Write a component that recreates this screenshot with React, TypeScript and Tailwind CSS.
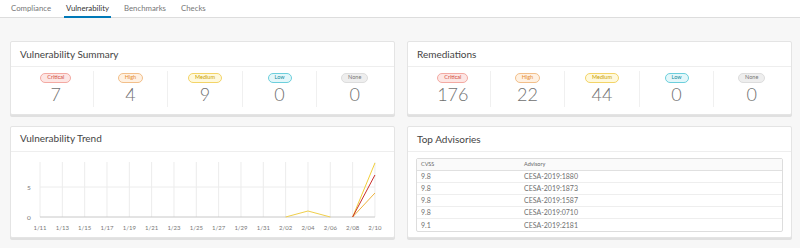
import React from "react";

const badgeStyles: Record<string, string> = {
  Critical: "bg-[#fde6e4] border-[#f3a9a2] text-[#d0463a]",
  High: "bg-[#fff1e2] border-[#f2bf8a] text-[#e58a2e]",
  Medium: "bg-[#fff9dc] border-[#f3d467] text-[#c9a100]",
  Low: "bg-[#e3f7fa] border-[#6ccfdc] text-[#138a9a]",
  None: "bg-[#eeeeee] border-[#dddddd] text-[#777777]",
};

function Badge({ label }: { label: string }) {
  return (
    <span
      className={`inline-flex items-center justify-center h-[10px] px-[6px] rounded-full border text-[5.5px] leading-none ${badgeStyles[label]}`}
    >
      {label}
    </span>
  );
}

function Card({ title, children, className = "" }: { title: string; children: React.ReactNode; className?: string }) {
  return (
    <div className={`bg-white border border-[#e4e4e4] rounded-[2px] shadow-[0_2px_0_0_#e0e0e0] flex flex-col ${className}`}>
      <div className="h-[25px] px-[9px] flex items-center border-b border-[#eeeeee] text-[10px] text-[#444]">{title}</div>
      {children}
    </div>
  );
}

function Summary({ values }: { values: number[] }) {
  const labels = ["Critical", "High", "Medium", "Low", "None"];
  return (
    <div className="grid grid-cols-5 pl-[8px] pr-[2px] pt-[4px] pb-[6px]">
      {labels.map((l, i) => (
        <div
          key={l}
          className={`flex flex-col items-center pt-[2px] h-[36px] ${i < 4 ? "border-r border-[#f0f0f0]" : ""}`}
        >
          <Badge label={l} />
          <div className="text-[18px] leading-[22px] font-light text-[#707070]">{values[i]}</div>
        </div>
      ))}
    </div>
  );
}

function Chart() {
  const labels = ["1/11", "1/13", "1/15", "1/17", "1/19", "1/21", "1/23", "1/25", "1/27", "1/29", "1/31", "2/02", "2/04", "2/06", "2/08", "2/10"];
  const x0 = 29;
  const step = 22.33;
  const y0 = 65;
  const u = 6;
  const X = (i: number) => x0 + i * step;
  const Y = (v: number) => y0 - v * u;
  return (
    <svg width="383" height="86" className="block" style={{ fontFamily: "Lato, sans-serif" }}>
      {labels.map((l, i) => (
        <line key={"g" + i} x1={X(i)} x2={X(i)} y1={10} y2={y0} stroke="#ececec" strokeWidth="1" />
      ))}
      <line x1={X(0)} x2={X(15)} y1={Y(5)} y2={Y(5)} stroke="#ececec" strokeWidth="1" />
      <line x1={X(0)} x2={X(15)} y1={y0} y2={y0} stroke="#c8c8c8" strokeWidth="1" />
      <text x={18} y={Y(5) + 2.5} fontSize="6.5" fill="#777" textAnchor="middle">5</text>
      <text x={18} y={y0 + 2.5} fontSize="6.5" fill="#777" textAnchor="middle">0</text>
      {labels.map((l, i) => (
        <text key={"l" + i} x={X(i)} y={77.5} fontSize="6" fill="#777" textAnchor="middle">{l}</text>
      ))}
      <polyline points={`${X(11)},${Y(0)} ${X(12)},${Y(1)} ${X(13)},${Y(0)}`} fill="none" stroke="#f0cf4c" strokeWidth="1" />
      <line x1={X(14)} y1={Y(0)} x2={X(15)} y2={Y(9)} stroke="#f2cf3a" strokeWidth="1" />
      <line x1={X(14)} y1={Y(0)} x2={X(15)} y2={Y(4)} stroke="#eeb23e" strokeWidth="1" />
      <line x1={X(14)} y1={Y(0)} x2={X(15)} y2={Y(7)} stroke="#c9302c" strokeWidth="1" />
    </svg>
  );
}

function Advisories() {
  const rows = [
    ["9.8", "CESA-2019:1880"],
    ["9.8", "CESA-2019:1873"],
    ["9.8", "CESA-2019:1587"],
    ["9.8", "CESA-2019:0710"],
    ["9.1", "CESA-2019:2181"],
  ];
  return (
    <div className="px-[8px] pt-[6px]">
      <div className="border border-[#dddddd] rounded-[2px] text-[#707070]">
        <div className="flex h-[12px] items-center bg-[#fafafa] border-b border-[#e0e0e0] text-[5.5px] text-[#666]">
          <div className="w-[107px] pl-[4px]">CVSS</div>
          <div>Advisory</div>
        </div>
        {rows.map((r, i) => (
          <div key={i} className={`flex h-[12px] items-center text-[7px] ${i < rows.length - 1 ? "border-b border-[#eeeeee]" : ""}`}>
            <div className="w-[107px] pl-[4px]">{r[0]}</div>
            <div>{r[1]}</div>
          </div>
        ))}
      </div>
    </div>
  );
}

export default function App() {
  const tabs = ["Compliance", "Vulnerability", "Benchmarks", "Checks"];
  return (
    <div className="w-[800px] h-[248px] overflow-hidden bg-[#f7f7f7]" style={{ fontFamily: "Lato, 'Noto Sans', sans-serif" }}>
      <div className="h-[18px] bg-white border-b border-[#dddddd] flex items-stretch pl-[11px] gap-[15px]">
        {tabs.map((t) => (
          <div
            key={t}
            className={`flex items-center text-[7.8px] ${t === "Vulnerability" ? "text-[#333] border-b-[2px] border-[#0079b8] -mb-px pt-[1px] mx-[-2px] px-[2px]" : "text-[#777]"}`}
          >
            {t}
          </div>
        ))}
      </div>
      <div className="grid grid-cols-2 gap-x-[12px] gap-y-[11px] px-[10px] pr-[8px] pt-[23px]">
        <Card title="Vulnerability Summary" className="h-[74px]">
          <Summary values={[7, 4, 9, 0, 0]} />
        </Card>
        <Card title="Remediations" className="h-[74px]">
          <Summary values={[176, 22, 44, 0, 0]} />
        </Card>
        <Card title="Vulnerability Trend" className="h-[112px]">
          <Chart />
        </Card>
        <Card title="Top Advisories" className="h-[112px]">
          <Advisories />
        </Card>
      </div>
    </div>
  );
}
